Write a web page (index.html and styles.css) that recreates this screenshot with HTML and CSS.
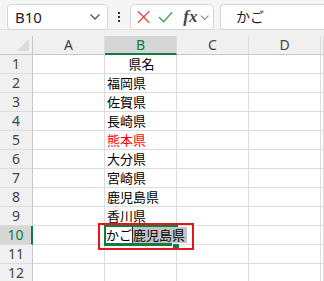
FILE: index.html
```html
<!DOCTYPE html>
<html lang="ja">
<head>
    <meta charset="UTF-8">
    <title>Sheet</title>
    <link rel="stylesheet" href="styles.css">
</head>
<body>
    <div class="toolbar">
        <div class="namebox">
            <span>B10</span>
            <svg width="12" height="8" viewBox="0 0 12 8"><path d="M1.5 1.5 L6 6 L10.5 1.5" fill="none" stroke="#555" stroke-width="1.3"/></svg>
        </div>
        <div class="dots"><i></i><i></i><i></i></div>
        <div class="fbuttons">
            <svg width="14" height="14" viewBox="0 0 14 14"><path d="M1 1 L13 13 M13 1 L1 13" stroke="#e8474a" stroke-width="1.4"/></svg>
            <svg width="16" height="14" viewBox="0 0 16 14"><path d="M1 7 L6 12 L15 2" fill="none" stroke="#3fa35a" stroke-width="1.4"/></svg>
            <span class="fx">fx</span>
            <svg width="10" height="7" viewBox="0 0 10 7"><path d="M1 1.5 L5 5.5 L9 1.5" fill="none" stroke="#888" stroke-width="1.1"/></svg>
        </div>
        <div class="formula">かご</div>
    </div>

    <div class="sheet">
        <div class="gap"></div>
        <div class="grid">
            <div class="corner"></div>
            <div class="colhead">A</div>
            <div class="colhead active">B</div>
            <div class="colhead">C</div>
            <div class="colhead">D</div>
            <div class="colhead"></div>

            <div class="rowhead">1</div><div class="cell"></div><div class="cell center">県名</div><div class="cell"></div><div class="cell"></div><div class="cell"></div>
            <div class="rowhead">2</div><div class="cell"></div><div class="cell">福岡県</div><div class="cell"></div><div class="cell"></div><div class="cell"></div>
            <div class="rowhead">3</div><div class="cell"></div><div class="cell">佐賀県</div><div class="cell"></div><div class="cell"></div><div class="cell"></div>
            <div class="rowhead">4</div><div class="cell"></div><div class="cell">長崎県</div><div class="cell"></div><div class="cell"></div><div class="cell"></div>
            <div class="rowhead">5</div><div class="cell"></div><div class="cell red">熊本県</div><div class="cell"></div><div class="cell"></div><div class="cell"></div>
            <div class="rowhead">6</div><div class="cell"></div><div class="cell">大分県</div><div class="cell"></div><div class="cell"></div><div class="cell"></div>
            <div class="rowhead">7</div><div class="cell"></div><div class="cell">宮崎県</div><div class="cell"></div><div class="cell"></div><div class="cell"></div>
            <div class="rowhead">8</div><div class="cell"></div><div class="cell">鹿児島県</div><div class="cell"></div><div class="cell"></div><div class="cell"></div>
            <div class="rowhead">9</div><div class="cell"></div><div class="cell">香川県</div><div class="cell"></div><div class="cell"></div><div class="cell"></div>
            <div class="rowhead active">10</div><div class="cell"></div>
            <div class="cell editing">
                <span class="typed">かご</span><span class="suggest">鹿児島県</span>
                <span class="handle"></span>
                <span class="mark"></span>
            </div>
            <div class="cell"></div><div class="cell"></div><div class="cell"></div>
            <div class="rowhead">11</div><div class="cell"></div><div class="cell"></div><div class="cell"></div><div class="cell"></div><div class="cell"></div>
            <div class="rowhead">12</div><div class="cell"></div><div class="cell"></div><div class="cell"></div><div class="cell"></div><div class="cell"></div>
        </div>
    </div>
</body>
</html>
```

FILE: styles.css
```css
body {
    margin: 0;
    width: 324px;
    height: 281px;
    overflow: hidden;
    background: #fff;
    font-family: "Noto Sans", "Noto Sans CJK JP", sans-serif;
}

.toolbar {
    height: 30px;
    background: #f5f5f5;
    border-bottom: 1px solid #e3e3e3;
    display: flex;
    align-items: flex-start;
    padding: 4px 0 0 7px;
    box-sizing: border-box;
}

.namebox {
    width: 101px;
    height: 26px;
    box-sizing: border-box;
    background: #fff;
    border: 1px solid #d6d6d6;
    border-radius: 4px;
    display: flex;
    align-items: center;
    justify-content: space-between;
    padding: 0 6px 0 7px;
    font-size: 15px;
    color: #222;
}

.dots {
    width: 22px;
    height: 26px;
    display: flex;
    flex-direction: column;
    align-items: center;
    justify-content: center;
    gap: 2px;
}

.dots i {
    width: 2px;
    height: 2px;
    background: #333;
}

.fbuttons {
    width: 84px;
    height: 26px;
    box-sizing: border-box;
    background: #fff;
    border: 1px solid #d6d6d6;
    border-radius: 4px;
    display: flex;
    align-items: center;
    padding: 0 4px 0 6px;
    gap: 8px;
}

.fx {
    font-family: "Liberation Serif", serif;
    font-style: italic;
    font-weight: bold;
    font-size: 17px;
    color: #444;
    margin-left: 2px;
    margin-right: -6px;
}

.formula {
    flex: 1;
    margin-left: 6px;
    height: 26px;
    box-sizing: border-box;
    background: #fff;
    border: 1px solid #d6d6d6;
    border-right: none;
    border-radius: 4px 0 0 4px;
    padding-left: 15px;
    font-size: 14px;
    line-height: 24px;
    color: #222;
}

.sheet {
    background: #f0f0f0;
    overflow: hidden;
}

.gap {
    height: 6px;
}

.grid {
    display: grid;
    grid-template-columns: 33px 72px 72px 72px 72px 1fr;
    grid-auto-rows: 19px;
    background: #fff;
}

.grid > div {
    box-sizing: border-box;
    border-right: 1px solid #dcdcdc;
    border-bottom: 1px solid #dcdcdc;
}

.corner {
    background: #f0f0f0;
    position: relative;
    border-bottom: 1px solid #c8c8c8 !important;
    border-right: 1px solid #c8c8c8 !important;
}

.corner::after {
    content: "";
    position: absolute;
    right: 3px;
    bottom: 3px;
    border-left: 12px solid transparent;
    border-bottom: 12px solid #dcdcdc;
}

.colhead {
    background: #f0f0f0;
    border-bottom: 1px solid #c8c8c8 !important;
    text-align: center;
    font-size: 14px;
    line-height: 18px;
    color: #444;
}

.colhead.active {
    background: #d6d6d6;
    color: #107c41;
    border-bottom: 2px solid #107c41 !important;
}

.rowhead {
    background: #f0f0f0;
    text-align: center;
    font-size: 14px;
    line-height: 18px;
    color: #444;
    border-right: 1px solid #c8c8c8 !important;
}

.rowhead.active {
    background: #d6d6d6;
    color: #107c41;
    border-right: 2px solid #107c41 !important;
}

.cell {
    font-family: "Noto Sans CJK JP", sans-serif;
    font-size: 13px;
    line-height: 18px;
    color: #000;
    padding-left: 2px;
    white-space: nowrap;
}

.center {
    text-align: center;
}

.red {
    color: #f00;
}

.editing {
    position: relative;
    overflow: visible;
    box-shadow: 0 0 0 1px #107c41, inset 0 0 0 1px #107c41;
    border-color: #107c41 !important;
    z-index: 1;
    display: flex;
    align-items: flex-start;
    padding-top: 1px;
    padding-left: 1px !important;
}

.typed {
    background: #fff;
    border-right: 1px solid #222;
    line-height: 16px;
}

.suggest {
    background: #c3c3c3;
    line-height: 16px;
    padding-right: 2px;
    margin-right: -6px;
}

.handle {
    position: absolute;
    right: -4px;
    bottom: -5px;
    width: 6px;
    height: 4px;
    background: #107c41;
    border: 1px solid #fff;
}

.mark {
    position: absolute;
    left: -7px;
    top: -3px;
    width: 96px;
    height: 27px;
    box-sizing: border-box;
    border: 2px solid #e8141c;
}
```
